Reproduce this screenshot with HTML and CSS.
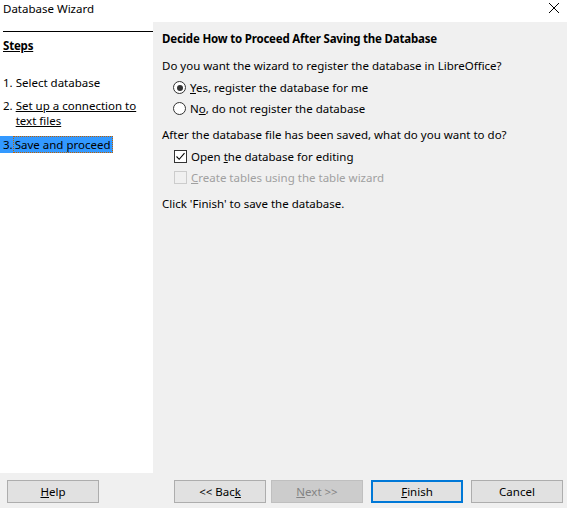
FILE: index.html
```html
<!DOCTYPE html>
<html>
<head>
<meta charset="utf-8">
<link rel="stylesheet" href="styles.css">
</head>
<body>
<div class="window">
  <div class="titlebar">
    <span class="title">Database Wizard</span>
    <svg class="close" width="12" height="12" viewBox="0 0 12 12"><path d="M1 1 L11 11 M11 1 L1 11" stroke="#000" stroke-width="1" fill="none"/></svg>
  </div>
  <div class="main">
    <div class="steps">
      <div class="steps-rule"></div>
      <div class="steps-head">Steps</div>
      <div class="step step1">1. Select database</div>
      <div class="step step2"><span class="num">2.</span><span class="u">Set up a connection to text files</span></div>
      <div class="step step3"><span class="sel">3.<span class="focus">Save and proceed</span></span></div>
    </div>
    <div class="content">
      <div class="heading">Decide How to Proceed After Saving the Database</div>
      <div class="q q1">Do you want the wizard to register the database in LibreOffice?</div>
      <div class="opt first"><span class="radio on"></span><span><u>Y</u>es, register the database for me</span></div>
      <div class="opt"><span class="radio"></span><span>N<u>o</u>, do not register the database</span></div>
      <div class="q q2">After the database file has been saved, what do you want to do?</div>
      <div class="opt opt-c first"><span class="check on"><svg width="11" height="11" viewBox="0 0 11 11"><path d="M1.5 5.5 L4.2 8.3 L9.5 2.2" stroke="#000" stroke-width="1.1" fill="none"/></svg></span><span>Open <u>t</u>he database for editing</span></div>
      <div class="opt opt-c disabled"><span class="check"></span><span><u>C</u>reate tables using the table wizard</span></div>
      <div class="q q3">Click 'Finish' to save the database.</div>
    </div>
  </div>
  <div class="footer">
    <button class="btn help"><u>H</u>elp</button>
    <div class="spacer"></div>
    <button class="btn back">&lt;&lt; Bac<u>k</u></button>
    <button class="btn next" disabled><u>N</u>ext &gt;&gt;</button>
    <button class="btn finish"><u>F</u>inish</button>
    <button class="btn cancel">Cancel</button>
  </div>
</div>
</body>
</html>
```
FILE: styles.css
```css
html, body {
  margin: 0;
  padding: 0;
  background: #f0f0f0;
}
body {
  font-family: "Noto Sans", "Open Sans", sans-serif;
  font-size: 11.5px;
  color: #000;
}
.window {
  width: 567px;
  height: 508px;
  display: flex;
  flex-direction: column;
  overflow: hidden;
}
.titlebar {
  height: 22px;
  background: #fff;
  display: flex;
  align-items: center;
  justify-content: space-between;
  padding: 0 7px 0 3px;
}
.title {
  position: relative;
  top: -3px;
}
.close {
  position: relative;
  top: -3px;
}
.main {
  height: 451px;
  display: flex;
}
.steps {
  width: 153px;
  background: #fff;
  display: flex;
  flex-direction: column;
}
.steps-rule {
  height: 1px;
  background: #000;
  margin: 9px 0 0 3px;
}
.steps-head {
  font-weight: bold;
  letter-spacing: -0.2px;
  text-decoration: underline;
  margin: 6px 0 0 3px;
  line-height: 16px;
}
.step {
  line-height: 15px;
  padding-left: 3px;
}
.step1 { margin-top: 21px; }
.step2 {
  margin-top: 8px;
  display: flex;
}
.step2 .num { flex: none; }
.step2 .u {
  text-decoration: underline;
  padding-left: 3px;
  width: 128px;
}
.step3 {
  margin-top: 8px;
  padding-left: 0;
}
.sel {
  display: inline-flex;
  align-items: stretch;
  background: #3399ff;
  height: 17px;
  line-height: 17px;
  padding: 0 0 0 3px;
  white-space: nowrap;
}
.focus {
  display: inline-block;
  outline: 1px dotted #c06000;
  outline-offset: -1px;
  padding: 0 2px 0 2px;
}
.content {
  flex: 1;
  background: #f0f0f0;
  padding: 0 0 0 9px;
}
.heading {
  font-weight: bold;
  letter-spacing: -0.2px;
  margin-top: 9px;
  line-height: 16px;
}
.q {
  line-height: 16px;
}
.q1 { margin-top: 11px; }
.q2 { margin-top: 8px; }
.q3 { margin-top: 8px; }
.opt {
  display: flex;
  align-items: center;
  gap: 4px;
  height: 21px;
  padding-left: 11px;
}
.opt.first { margin-top: 3px; }
.radio {
  width: 11px;
  height: 11px;
  border: 1px solid #333;
  border-radius: 50%;
  background: #fff;
  position: relative;
  flex: none;
}
.radio.on::after {
  content: "";
  position: absolute;
  left: 2.5px;
  top: 2.5px;
  width: 6px;
  height: 6px;
  border-radius: 50%;
  background: #333;
}
.opt-c { padding-left: 12px; }
.check {
  width: 11px;
  height: 11px;
  border: 1px solid #333;
  background: #fff;
  flex: none;
  display: flex;
  align-items: center;
  justify-content: center;
}
.check svg { display: block; }
.disabled { color: #a0a0a0; }
.disabled .check {
  border-color: #cccccc;
  background: #f0f0f0;
}
.footer {
  flex: 1;
  display: flex;
  align-items: flex-start;
  padding: 7px 4px 0 7px;
}
.spacer { flex: 1; }
.btn {
  font-family: inherit;
  font-size: 11.5px;
  width: 92px;
  height: 23px;
  background: #e1e1e1;
  border: 1px solid #adadad;
  color: #000;
  padding: 0;
  margin: 0;
  flex: none;
}
.btn.next {
  background: #cccccc;
  border-color: #bfbfbf;
  color: #838383;
  margin-left: 5px;
}
.btn.finish {
  border: 2px solid #0078d7;
  margin-left: 8px;
}
.btn.cancel {
  margin-left: 8px;
}
```
